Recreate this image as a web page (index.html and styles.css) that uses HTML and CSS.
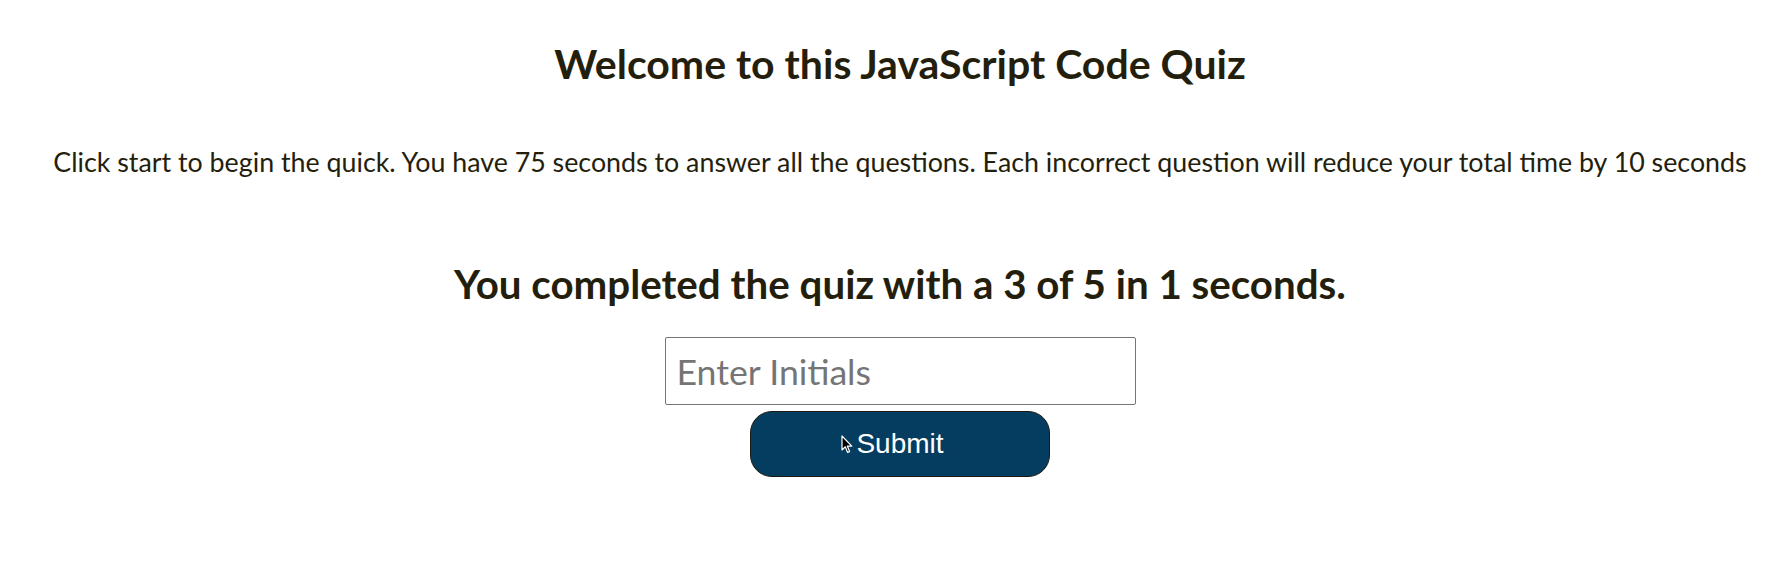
FILE: index.html
```html
<!DOCTYPE html>
<html lang="en">
<head>
<meta charset="utf-8">
<title>JavaScript Code Quiz</title>
<link rel="stylesheet" href="styles.css">
</head>
<body>
<main class="quiz">
  <h1 class="title">Welcome to this JavaScript Code Quiz</h1>
  <p class="intro">Click start to begin the quick. You have 75 seconds to answer all the questions. Each incorrect question will reduce your total time by 10 seconds</p>
  <section class="result">
    <h2 class="score">You completed the quiz with a 3 of 5 in 1 seconds.</h2>
    <form class="entry">
      <input class="initials" type="text" placeholder="Enter Initials">
      <div class="btn-wrap">
        <button class="submit" type="button">Submit</button>
        <svg class="cursor" width="12" height="19" viewBox="0 0 12 19"><path d="M1 1 L1 15 L4.3 11.8 L6.6 17.4 L8.6 16.6 L6.3 11.1 L10.8 11.1 Z" fill="#000" stroke="#fff" stroke-width="1.2" stroke-linejoin="round"/></svg>
      </div>
    </form>
  </section>
</main>
</body>
</html>
```
FILE: styles.css
```css
html, body {
  margin: 0;
  padding: 0;
  background: #ffffff;
}
body {
  padding-left: 21px;
  font-family: "Lato", "Open Sans", sans-serif;
  color: #241e0c;
}
.quiz {
  display: flex;
  flex-direction: column;
  align-items: center;
  text-align: center;
}
.title {
  margin: 40px 0 0;
  font-size: 41px;
  line-height: 48px;
  font-weight: 700;
}
.intro {
  margin: 57px 0 0;
  font-size: 26.8px;
  line-height: 34px;
  font-weight: 400;
  white-space: nowrap;
}
.result {
  display: flex;
  flex-direction: column;
  align-items: center;
}
.score {
  margin: 81px 0 0;
  font-size: 40.3px;
  line-height: 48px;
  font-weight: 700;
}
.entry {
  display: flex;
  flex-direction: column;
  align-items: center;
  margin-top: 29px;
}
.initials {
  box-sizing: border-box;
  width: 471px;
  height: 68px;
  border: 1px solid #767676;
  border-radius: 2px;
  padding: 0 11px;
  font-family: "Lato", "Open Sans", sans-serif;
  font-size: 35.7px;
  color: #241e0c;
}
.initials::placeholder {
  color: #757575;
}
.btn-wrap {
  position: relative;
  margin-top: 6px;
}
.submit {
  box-sizing: border-box;
  width: 300px;
  height: 66px;
  border: 1.5px solid #1c1a12;
  border-radius: 22px;
  background: #053d60;
  color: #ffffff;
  font-family: "Liberation Sans", Arial, sans-serif;
  font-size: 28px;
  padding: 0;
}
.cursor {
  position: absolute;
  left: 91px;
  top: 24px;
}
```
